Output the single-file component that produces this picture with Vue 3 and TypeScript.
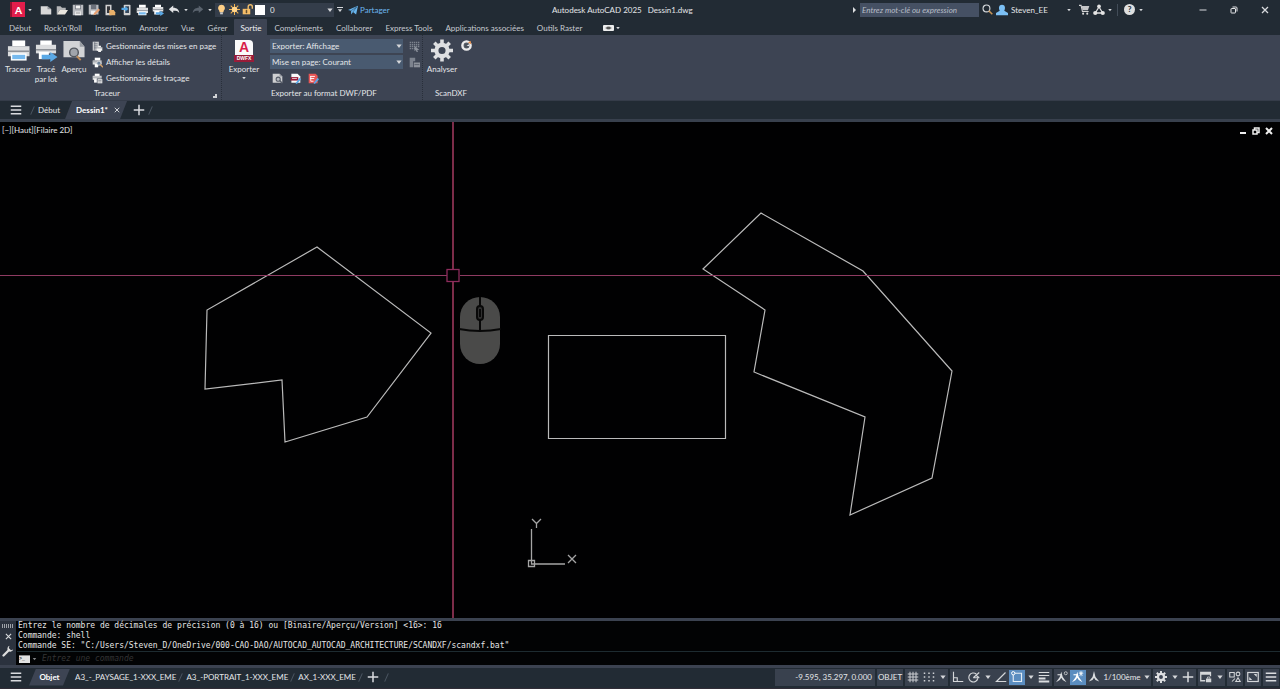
<script setup lang="ts">
import { ref } from 'vue'

interface StatusItem { id: string; label: string; kind?: 'drop' | 'on' }

const quickAccess: [string, string][] = [
  ['i-new', 'Nouveau'], ['i-open', 'Ouvrir'], ['i-save', 'Enregistrer'], ['i-saveas', 'Enregistrer sous'],
  ['i-mobdoc', 'Ouvrir depuis mobile'], ['i-mobile', 'Enregistrer sur mobile'], ['i-print', 'Tracer'],
  ['i-batch', 'Tracé par lot'], ['i-undo', 'Annuler'],
]
const ribbonTabs = ['Début', "Rock'n'Roll", 'Insertion', 'Annoter', 'Vue', 'Gérer', 'Sortie', 'Compléments',
  'Collaborer', 'Express Tools', 'Applications associées', 'Outils Raster']
const activeTab = ref('Sortie')
const layer = ref('0')
const exportMode = ref('Exporter: Affichage')
const pageSetup = ref('Mise en page: Courant')
const search = ref('')
const command = ref('')
const layouts = ['A3_-_PAYSAGE_1-XXX_EME', 'A3_-PORTRAIT_1-XXX_EME', 'AX_1-XXX_EME']
const history = [
  'Entrez le nombre de décimales de précision (0 à 16) ou [Binaire/Aperçu/Version] <16>: 16',
  'Commande: shell',
  'Commande SE: "C:/Users/Steven_D/OneDrive/000-CAO-DAO/AUTOCAD_AUTOCAD_ARCHITECTURE/SCANDXF/scandxf.bat"',
]
const polygons = [
  '317,125 431,211 367,295 285,320 282,258 205,267 207,188',
  '548.5,213.5 725.5,213.5 725.5,316.5 548.5,316.5',
  '761,91 863,149 952,249 932,356 850,393 865,295 754,250 765,188 703,147',
]
const drafting: StatusItem[][] = [
  [{ id: 'i-grid', label: 'Grille' }, { id: 'i-dots', label: 'Accrochage' }, { id: 'i-down', label: 'Options accrochage', kind: 'drop' }],
  [{ id: 'i-ortho', label: 'Ortho' }, { id: 'i-polar', label: 'Polaire' }, { id: 'i-down', label: 'Options polaire', kind: 'drop' },
    { id: 'i-angle', label: 'Repérage' }, { id: 'i-osnap', label: 'Accrochage objet', kind: 'on' },
    { id: 'i-down', label: 'Options accrochage objet', kind: 'drop' }, { id: 'i-weight', label: 'Épaisseur' }],
  [{ id: 'i-ann1', label: 'Visibilité annotation' }, { id: 'i-ann2', label: 'Échelle automatique', kind: 'on' }, { id: 'i-ann', label: 'Annotation' }],
]
const system: StatusItem[][] = [
  [{ id: 'i-gear', label: 'Espace de travail' }, { id: 'i-down', label: 'Choix espace', kind: 'drop' }, { id: 'i-plus', label: 'Moniteur' }],
  [{ id: 'i-units', label: 'Interface' }, { id: 'i-down', label: 'Options interface', kind: 'drop' }],
  [{ id: 'i-isolate', label: 'Isoler' }],
  [{ id: 'i-full', label: 'Plein écran' }],
  [{ id: 'i-menu', label: 'Personnalisation' }],
]
</script>

<template>
  <div class="app">
    <svg class="defs" aria-hidden="true">
      <symbol id="i-down" viewBox="0 0 16 16"><path d="M1 4h14l-7 9z" fill="#d5d7da" /></symbol>
      <symbol id="i-new" viewBox="0 0 16 16"><path d="M1 3h9l5 4v7H1z" fill="#d8d8d8" /><path d="M10 3v4h5z" fill="#8d9198" /></symbol>
      <symbol id="i-open" viewBox="0 0 16 16"><path d="M1 14V3h5l2 2h5v3H5z" fill="#b5b6b8" /><path d="M5 8h11l-4 6H1z" fill="#ebe7df" /></symbol>
      <symbol id="i-save" viewBox="0 0 16 16"><path d="M1 1h14v14H1z" fill="#b9bbbf" /><path d="M4 1h8v6H4z" fill="#6c717b" /><path d="M5 2h6v4H5zM4 10h8v5H4z" fill="#f0f0f0" /><path d="M5 12h6" stroke="#777" /></symbol>
      <symbol id="i-saveas" viewBox="0 0 16 16"><path d="M1 1h13v13H1z" fill="#b9bbbf" /><path d="M4 1h7v6H4z" fill="#6c717b" /><path d="M4 9h6v5H4z" fill="#f0f0f0" /><path d="M7 15l1-3 6-6 2 2-6 6z" fill="#e8a070" /></symbol>
      <symbol id="i-mobdoc" viewBox="0 0 16 16"><rect x="2" y="1" width="8" height="14" fill="#d2d2d2" /><path d="M4 3h4v9H4z" fill="#34363b" /><path d="M7 8h6l2 3v4H7z" fill="#e8b06a" /></symbol>
      <symbol id="i-mobile" viewBox="0 0 16 16"><rect x="5" y="1" width="9" height="14" rx="1" fill="#d2d2d2" /><path d="M7 3h5v9H7z" fill="#35475b" /><path d="M2 5h5V3l4 3.500L7 10V8H2z" fill="#55a9e8" /></symbol>
      <symbol id="i-print" viewBox="0 0 16 16"><path d="M4 1h9v4H4z" fill="#fff" /><path d="M1 5h15v7H1z" fill="#dcdddf" /><path d="M1 8h15v1H1z" fill="#8a8d94" /><path d="M3 10h11v5H3z" fill="#fff" /><path d="M4 11h9v3H4z" fill="#76b9ee" /></symbol>
      <symbol id="i-batch" viewBox="0 0 16 16"><path d="M4 1h8v4H4z" fill="#fff" /><path d="M1 4h14v6H1z" fill="#dcdddf" /><path d="M1 7h14v1H1z" fill="#8a8d94" /><path d="M3 9h7v5H3z" fill="#fff" /><path d="M5 11h6V9l5 3.500-5 3.500v-2H5z" fill="#5ba9e6" /></symbol>
      <symbol id="i-undo" viewBox="0 0 16 16"><path d="M1 7l6-5v3c5 0 8 3 8 7-2-3-4-3-8-3v3z" fill="#e2e3e5" /></symbol>
      <symbol id="i-redo" viewBox="0 0 16 16"><path d="M15 7L9 2v3C4 5 1 8 1 12c2-3 4-3 8-3v3z" fill="#59626d" /></symbol>
      <symbol id="i-bulb" viewBox="0 0 16 16"><path d="M8 1a5 5 0 0 1 3 9v2H5v-2a5 5 0 0 1 3-9z" fill="#ffcf86" /><path d="M6 12h4v3H6z" fill="#c9c9c9" /></symbol>
      <symbol id="i-sun" viewBox="0 0 16 16"><path d="M8 0v16M0 8h16M2.500 2.500l11 11M13.500 2.500l-11 11" stroke="#f0b04e" stroke-width="1.500" /><circle cx="8" cy="8" r="4" fill="#ffd48c" /></symbol>
      <symbol id="i-lock" viewBox="0 0 16 16"><path d="M9 8V4a3 3 0 0 1 6 0v3" fill="none" stroke="#f0bd6b" stroke-width="2" /><path d="M1 7h11v8H1z" fill="#f4bd68" /><path d="M6 9h1v4H6z" fill="#59462b" stroke="#59462b" /></symbol>
      <symbol id="i-plane" viewBox="0 0 16 16"><path d="M0 8L16 1l-3 14-5-4-3 4V9z" fill="#68b5ee" /><path d="M5 9l9-6-6 8" fill="none" stroke="#294b66" /></symbol>
      <symbol id="i-search" viewBox="0 0 16 16"><circle cx="6.500" cy="6.500" r="5" fill="none" stroke="#d7dade" stroke-width="1.600" /><path d="M10 10l5 5" stroke="#c99556" stroke-width="2.200" /></symbol>
      <symbol id="i-user" viewBox="0 0 16 16"><path d="M5 9C3 5 4 1 8 1s5 4 3 8l5 3v3H0v-3z" fill="#7cc0f5" /></symbol>
      <symbol id="i-cart" viewBox="0 0 16 16"><path d="M0 2h3l2 9h9" fill="none" stroke="#d4d4d4" stroke-width="1.600" /><path d="M4 3h11l-2 6H5z" fill="#c5c6c8" /><circle cx="6" cy="14" r="1.500" fill="#ddd" /><circle cx="12" cy="14" r="1.500" fill="#ddd" /></symbol>
      <symbol id="i-apps" viewBox="0 0 16 16"><path d="M8 4l5 8H3z" fill="none" stroke="#dedede" stroke-width="1.700" /><circle cx="8" cy="3" r="2.500" fill="#e4e4e4" /><circle cx="3" cy="12" r="2.800" fill="#e4e4e4" /><circle cx="13" cy="12" r="2.800" fill="#e4e4e4" /></symbol>
      <symbol id="i-menu" viewBox="0 0 16 16"><path d="M1 3h14M1 8h14M1 13h14" stroke="#dadcdf" stroke-width="2" /></symbol>
      <symbol id="i-plus" viewBox="0 0 16 16"><path d="M8 1v14M1 8h14" stroke="#dadcdf" stroke-width="2" /></symbol>
      <symbol id="i-x" viewBox="0 0 16 16"><path d="M2 2l12 12M14 2L2 14" stroke="#d8dadd" stroke-width="2.500" /></symbol>
      <symbol id="i-min" viewBox="0 0 16 16"><path d="M1 8h14" stroke="#d8dadd" stroke-width="2" /></symbol>
      <symbol id="i-restore" viewBox="0 0 16 16"><rect x="2" y="5" width="9" height="9" rx="1" fill="none" stroke="#e4e5e7" stroke-width="2" /><path d="M5 2h7q2 0 2 2v7" fill="none" stroke="#e4e5e7" stroke-width="2" /></symbol>
      <symbol id="i-page" viewBox="0 0 16 16"><path d="M1 1h9v13H1z" fill="#c9cbce" /><path d="M3 4h5M3 7h5M3 10h5M4 1v13" stroke="#656b77" /><path d="M7 9h8v5H7zM9 7h4v2H9zM9 12h4v4H9z" fill="#f3f3f3" /><path d="M7 10h8" stroke="#7b8089" /></symbol>
      <symbol id="i-detail" viewBox="0 0 16 16"><path d="M4 1h8v4H4z" fill="#fff" /><path d="M1 5h13v6H1z" fill="#dcdddf" /><path d="M1 7h13" stroke="#80848c" /><path d="M4 10h5v5H4z" fill="#fff" /><circle cx="10" cy="9" r="3" fill="#6b8198" stroke="#e8e8e8" /><path d="M12 11l4 4" stroke="#d3a16a" stroke-width="2" /></symbol>
      <symbol id="i-plotmgr" viewBox="0 0 16 16"><path d="M4 1h7v4H4z" fill="#fff" /><path d="M1 4h13v6H1z" fill="#dcdddf" /><path d="M1 6h13" stroke="#80848c" /><path d="M3 9h5v5H3z" fill="#fff" /><path d="M7 8h9v8H7z" fill="#3d4453" /><path d="M8 9h7v6H8z" fill="#f0f0f0" /><path d="M9 11h5M9 13h5" stroke="#747a84" /></symbol>
      <symbol id="i-previewS" viewBox="0 0 16 16"><path d="M1 1h10l4 4v9H1z" fill="#cfd0d2" /><path d="M11 1v4h4z" fill="#94989f" /><circle cx="9" cy="9" r="3" fill="#b9bcc2" stroke="#565c68" stroke-width="1.500" /><path d="M11 11l4 4" stroke="#565c68" stroke-width="2" /></symbol>
      <symbol id="i-dwf" viewBox="0 0 16 16"><path d="M2 1h9l4 4v9H2z" fill="#fafafa" /><path d="M1 6h11v5H1z" fill="#991c38" /><path d="M3 8h7" stroke="#fff" /><path d="M8 15l6-8 2 2-6 7z" fill="#58a7e8" /></symbol>
      <symbol id="i-pdf" viewBox="0 0 16 16"><path d="M1 1h10l3 3v11H1z" fill="#e65656" /><path d="M3 5h7M3 8h6M4 5v7h4" stroke="#fff" fill="none" stroke-width="1.300" /><path d="M8 15l6-8 2 2-6 7z" fill="#58a7e8" /></symbol>
      <symbol id="i-window" viewBox="0 0 16 16"><path d="M1 2h14M1 5h14M1 8h14M1 11h8" stroke="#7d838e" stroke-width="2" stroke-dasharray="2 1" /><path d="M8 7l7 6-3 0 1 3-2 0-1-3-2 2z" fill="#8c929c" /></symbol>
      <symbol id="i-override" viewBox="0 0 16 16"><path d="M1 1h8v5H6v9H1z" fill="#7d838e" /><path d="M7 8h9v7H7z" fill="#8d929b" /><path d="M8 11h7" stroke="#4a505c" /></symbol>
      <symbol id="i-gear" viewBox="0 0 16 16"><path d="M8 0v16M0 8h16M2.400 2.400l11.200 11.200M13.600 2.400L2.400 13.600" stroke="#dedfe1" stroke-width="2.600" /><circle cx="8" cy="8" r="4.100" fill="#3d4453" stroke="#dedfe1" stroke-width="3" /></symbol>
      <symbol id="i-scan" viewBox="0 0 16 16"><circle cx="8" cy="8" r="6" fill="#555b64" stroke="#ececec" stroke-width="3.500" /><path d="M6 6h5v5H6z" fill="#4a505a" /><path d="M8 8l4-2v3z" fill="#eee" /><path d="M10 4l4-3 1 5z" fill="#e28b4b" /></symbol>
      <symbol id="i-wrench" viewBox="0 0 16 16"><path d="M2 14l7-7" stroke="#dedede" stroke-width="3" stroke-linecap="round" /><path d="M10 1a4 4 0 1 0 5 5l-3 1-3-3z" fill="#dedede" /></symbol>
      <symbol id="i-grid" viewBox="0 0 16 16"><path d="M4 1v14M8 1v14M12 1v14M1 4h14M1 8h14M1 12h14" stroke="#cfd1d5" stroke-width="1.300" /></symbol>
      <symbol id="i-dots" viewBox="0 0 16 16"><path d="M1 3h14M1 8h14M1 13h14" stroke="#cfd1d5" stroke-width="2" stroke-dasharray="2 4" /></symbol>
      <symbol id="i-ortho" viewBox="0 0 16 16"><path d="M2 1v13h13M2 9h5v5" fill="none" stroke="#d4d6d9" stroke-width="1.500" /></symbol>
      <symbol id="i-polar" viewBox="0 0 16 16"><path d="M13 10a6 6 0 1 1-2-6M7 9l8-7M7 9h8M11 6l4 3" fill="none" stroke="#d4d6d9" stroke-width="1.500" /></symbol>
      <symbol id="i-angle" viewBox="0 0 16 16"><path d="M14 2L2 14h13" fill="none" stroke="#d4d6d9" stroke-width="1.600" /></symbol>
      <symbol id="i-osnap" viewBox="0 0 16 16"><path d="M3 3h11v11H3z" fill="none" stroke="#e5edf4" stroke-width="1.500" /><circle cx="3" cy="3" r="2.200" fill="#5b8dc0" stroke="#fff" stroke-width="1.300" /></symbol>
      <symbol id="i-weight" viewBox="0 0 16 16"><path d="M1 2h14M1 6h14" stroke="#dadcdf" stroke-width="1.500" /><path d="M1 10h9M1 14h14" stroke="#dadcdf" stroke-width="2.500" /></symbol>
      <symbol id="i-ann" viewBox="0 0 16 16"><path d="M8 0l2 8 5 6-5-2-2-3-2 3-5 2 5-6z" fill="#dcdee0" /></symbol>
      <symbol id="i-ann1" viewBox="0 0 16 16"><path d="M7 1l2 7 5 7-5-3-2-3-2 3-5 3 5-7z" fill="#dcdee0" /><path d="M2 5h5" stroke="#dcdee0" stroke-width="1.500" /><circle cx="13" cy="3" r="2" fill="none" stroke="#ddd" /></symbol>
      <symbol id="i-ann2" viewBox="0 0 16 16"><path d="M7 1l2 7 5 7-5-3-2-3-2 3-5 3 5-7z" fill="#fff" /><path d="M2 5h5" stroke="#fff" stroke-width="1.500" /><path d="M12 0v7M9 3h6M10 1l4 5M14 1l-4 5" stroke="#fff" /></symbol>
      <symbol id="i-units" viewBox="0 0 16 16"><path d="M7 13H1V2h13v5M1 4h13" fill="none" stroke="#d4d6d9" stroke-width="1.700" /><path d="M8 10h7v5H8z" fill="#d4d6d9" /><path d="M10 10V8h3v2" fill="none" stroke="#d4d6d9" /></symbol>
      <symbol id="i-isolate" viewBox="0 0 16 16"><path d="M1 2h6v6H1zM9 14l3-5 3 5zM4 14l4-4" fill="none" stroke="#d4d6d9" stroke-width="1.400" /><circle cx="12" cy="4" r="2.500" fill="none" stroke="#d4d6d9" stroke-width="1.400" /></symbol>
      <symbol id="i-full" viewBox="0 0 16 16"><rect x="1" y="2" width="14" height="12" fill="none" stroke="#d4d6d9" stroke-width="1.600" /><path d="M9 4h4v4zM3 8v4h4z" fill="#d4d6d9" /></symbol>
    </svg>

    <header class="titlebar">
      <div class="quick">
        <button class="logo" aria-label="Menu application">A</button>
        <svg class="caret logo-caret"><use href="#i-down" /></svg>
        <button v-for="[id, label] in quickAccess" :key="id" class="qa" :aria-label="label"><svg class="ic"><use :href="'#' + id" /></svg></button>
        <button class="tiny" aria-label="Liste annuler"><svg class="caret"><use href="#i-down" /></svg></button>
        <button class="qa" aria-label="Rétablir"><svg class="ic"><use href="#i-redo" /></svg></button>
        <button class="tiny" aria-label="Liste rétablir"><svg class="caret"><use href="#i-down" /></svg></button>
        <div class="layer">
          <svg class="ic"><use href="#i-bulb" /></svg>
          <svg class="ic"><use href="#i-sun" /></svg>
          <svg class="ic"><use href="#i-lock" /></svg>
          <span class="swatch"></span>
          <select v-model="layer" aria-label="Calque"><option>0</option></select>
          <svg class="drop"><use href="#i-down" /></svg>
        </div>
        <button class="more" aria-label="Personnaliser"><svg class="drop"><use href="#i-down" /></svg></button>
        <button class="share"><svg class="ic"><use href="#i-plane" /></svg>Partager</button>
      </div>
      <div class="title"><span>Autodesk AutoCAD 2025</span><span>Dessin1.dwg</span></div>
      <div class="account">
        <span class="play"></span>
        <input v-model="search" class="search" type="text" placeholder="Entrez mot-clé ou expression" aria-label="Recherche" />
        <button class="qa" aria-label="Rechercher"><svg class="ic"><use href="#i-search" /></svg></button>
        <button class="user"><svg class="ic"><use href="#i-user" /></svg>Steven_EE<svg class="caret"><use href="#i-down" /></svg></button>
        <button class="qa" aria-label="Boutique"><svg class="ic small"><use href="#i-cart" /></svg></button>
        <button class="apps" aria-label="Applications"><svg class="ic"><use href="#i-apps" /></svg><svg class="caret"><use href="#i-down" /></svg></button>
        <button class="help" aria-label="Aide"><span>?</span><svg class="caret"><use href="#i-down" /></svg></button>
        <div class="window">
          <button aria-label="Réduire"><svg><use href="#i-min" /></svg></button>
          <button aria-label="Restaurer"><svg><use href="#i-restore" /></svg></button>
          <button aria-label="Fermer"><svg><use href="#i-x" /></svg></button>
        </div>
      </div>
    </header>

    <nav class="tabs">
      <button v-for="t in ribbonTabs" :key="t" :class="{ active: t === activeTab }" @click="activeTab = t">{{ t }}</button>
      <button class="collapse" aria-label="Réduire le ruban"><span></span><svg class="caret"><use href="#i-down" /></svg></button>
    </nav>

    <section class="ribbon">
      <div class="panel plot">
        <div class="tools">
          <button class="big"><svg><use href="#i-print" /></svg>Traceur</button>
          <button class="big batch"><svg><use href="#i-batch" /></svg>Tracé<br />par lot</button>
          <button class="big">
            <svg viewBox="0 0 24 24"><path d="M1 2h17l5 6v11H1z" fill="#d2d3d5" /><path d="M18 2v6h5z" fill="#999da3" /><circle cx="12" cy="14" r="4.500" fill="#a1a5ab" stroke="#53585f" stroke-width="1.500" /><path d="M15 18l4 4" stroke="#bd8a57" stroke-width="2" /></svg>Aperçu
          </button>
          <div class="list">
            <button><svg class="ic"><use href="#i-page" /></svg>Gestionnaire des mises en page</button>
            <button><svg class="ic"><use href="#i-detail" /></svg>Afficher les détails</button>
            <button><svg class="ic"><use href="#i-plotmgr" /></svg>Gestionnaire de traçage</button>
          </div>
        </div>
        <div class="caption">Traceur<span class="launcher"></span></div>
      </div>
      <div class="panel export">
        <button class="big dwfx">
          <span class="file"><b>A</b><i>DWFX</i></span>Exporter
          <svg class="caret"><use href="#i-down" /></svg>
        </button>
        <div class="side">
          <div class="row">
            <label class="combo"><select v-model="exportMode" aria-label="Zone à exporter"><option>Exporter: Affichage</option></select><svg class="drop"><use href="#i-down" /></svg></label>
            <svg class="ic"><use href="#i-window" /></svg>
          </div>
          <div class="row">
            <label class="combo"><select v-model="pageSetup" aria-label="Mise en page"><option>Mise en page: Courant</option></select><svg class="drop"><use href="#i-down" /></svg></label>
            <svg class="ic"><use href="#i-override" /></svg>
          </div>
          <div class="row minis">
            <button aria-label="Aperçu"><svg class="ic"><use href="#i-previewS" /></svg></button>
            <button aria-label="Options DWF"><svg class="ic"><use href="#i-dwf" /></svg></button>
            <button aria-label="Options PDF"><svg class="ic"><use href="#i-pdf" /></svg></button>
          </div>
          <div class="caption">Exporter au format DWF/PDF</div>
        </div>
      </div>
      <div class="panel scan">
        <div class="tools">
          <button class="big"><svg><use href="#i-gear" /></svg>Analyser</button>
          <button class="scan-mini" aria-label="Options d'analyse"><svg class="ic"><use href="#i-scan" /></svg></button>
        </div>
        <div class="caption">ScanDXF</div>
      </div>
    </section>

    <nav class="files">
      <button class="burger" aria-label="Menu fichiers"><svg class="ic"><use href="#i-menu" /></svg></button>
      <span class="slash"></span>
      <button class="file-tab">Début</button>
      <button class="file-tab current">Dessin1*<svg><use href="#i-x" /></svg></button>
      <button class="add" aria-label="Nouveau dessin"><svg class="ic"><use href="#i-plus" /></svg></button>
      <span class="slash"></span>
    </nav>

    <main class="canvas">
      <svg class="drawing">
        <g fill="none" stroke="#bababa" stroke-width="1.200">
          <polygon v-for="p in polygons" :key="p" :points="p" />
        </g>
        <path d="M0 153.500H447M460 153.500H4000" stroke="#8f3b62" />
        <path d="M453 0V147M453 160V2000" stroke="#7c2c49" stroke-width="2" />
        <rect x="447" y="147.500" width="12" height="12" fill="none" stroke="#8d2c5c" stroke-width="1.300" />
        <g fill="none" stroke="#a5a5a5" stroke-width="1.300">
          <path d="M531.500 407V442H565M528.500 438.500h6v6h-6zM532 397l4.500 4.500L541 397M536.500 401.500V406M568 433l8 8M576 433l-8 8" />
        </g>
        <rect x="460" y="175" width="40" height="67" rx="20" fill="#4a4a49" />
        <path d="M459 207q21 4 42 0M480 175v33" fill="none" stroke="#080808" stroke-width="2" />
        <rect x="477" y="184" width="6" height="14" rx="3" fill="#303030" stroke="#080808" stroke-width="2" />
        <path d="M480 187v8" stroke="#080808" stroke-width="2" />
      </svg>
      <div class="view-controls"><button>[−]</button><button>[Haut]</button><button>[Filaire 2D]</button></div>
      <div class="doc-window">
        <button aria-label="Réduire la vue"><svg><path d="M1 6h6" stroke="#eee" stroke-width="2" /></svg></button>
        <button aria-label="Restaurer la vue"><svg viewBox="0 0 16 16"><path d="M2 6h8v8H2zM5 6V2h9v9h-4" fill="none" stroke="#eee" stroke-width="3" /></svg></button>
        <button aria-label="Fermer la vue"><svg><path d="M1 1l6 6M7 1L1 7" stroke="#eee" stroke-width="2" /></svg></button>
      </div>
    </main>

    <section class="console">
      <div class="grip">
        <span class="bars"></span>
        <button aria-label="Fermer"><svg><use href="#i-x" /></svg></button>
        <button aria-label="Options"><svg class="wrench"><use href="#i-wrench" /></svg></button>
      </div>
      <div class="log">
        <p v-for="line in history" :key="line">{{ line }}</p>
        <label class="prompt"><span class="cmd-icon">&gt;_</span><svg class="caret"><use href="#i-down" /></svg><input v-model="command" type="text" placeholder="Entrez une commande" aria-label="Commande" /></label>
      </div>
    </section>

    <footer class="status">
      <button class="burger" aria-label="Menu présentations"><svg class="ic"><use href="#i-menu" /></svg></button>
      <button class="model">Objet</button>
      <template v-for="l in layouts" :key="l"><button class="layout">{{ l }}</button><span class="slash"></span></template>
      <button class="add" aria-label="Nouvelle présentation"><svg class="ic"><use href="#i-plus" /></svg></button>
      <span class="slash"></span>
      <div class="tray">
        <div class="cell coords">-9.595, 35.297, 0.000</div>
        <button class="cell object">OBJET</button>
        <div v-for="(g, n) in drafting" :key="n" class="cell">
          <button v-for="s in g" :key="s.label" :class="s.kind" :aria-label="s.label"><svg><use :href="'#' + s.id" /></svg></button>
          <button v-if="n === 2" class="scale">1/100ème<svg class="drop"><use href="#i-down" /></svg></button>
        </div>
        <div v-for="(g, n) in system" :key="'s' + n" class="cell">
          <button v-for="s in g" :key="s.label" :class="s.kind" :aria-label="s.label"><svg><use :href="'#' + s.id" /></svg></button>
        </div>
      </div>
    </footer>
  </div>
</template>

<style>
body { margin: 0; background: #222b34; }
</style>

<style scoped>
* { box-sizing: border-box; }
.app { min-height: 100vh; display: flex; flex-direction: column; background: #222b34; color: #e4e6e9; font: 8px/10px Lato, "Open Sans", sans-serif; white-space: nowrap; overflow: hidden; }
button, input, select { font: inherit; color: inherit; background: none; border: 0; padding: 0; margin: 0; }
button { display: flex; align-items: center; flex: none; cursor: pointer; }
svg { display: block; flex: none; }
.defs { position: absolute; width: 0; height: 0; }
.ic { width: 12px; height: 12px; }
.small { width: 10px; height: 10px; }
.caret { width: 4px; height: 4px; }
.drop { width: 6px; height: 6px; pointer-events: none; }
select { appearance: none; outline: 0; }

.titlebar { display: flex; align-items: center; height: 19px; }
.quick { display: flex; align-items: center; flex: 0 0 552px; }
.logo { width: 15px; height: 15px; margin-left: 10px; justify-content: center; background: #e21d4b; border-left: 2px solid #94102f; color: #fff; font-weight: 900; font-size: 10px; }
.logo-caret { margin: 0 6px 0 3px; }
.qa { width: 16px; justify-content: center; }
.tiny { width: 7px; justify-content: center; }
.quick .tiny + .qa { margin-left: 1px; }
.layer { display: flex; align-items: center; width: 119px; height: 14px; margin-left: 2px; padding: 0 1px; background: #343d4a; }
.layer .ic { width: 11px; height: 11px; margin-right: 2px; }
.swatch { width: 10px; height: 10px; background: #fff; }
.layer select { flex: 1; min-width: 0; padding-left: 5px; }
.more { width: 11px; justify-content: center; border: 0; }
.more .drop { border-top: 1px solid #d5d7da; }
.share { gap: 2px; margin-left: 3px; color: #6db7f0; }
.share .ic { width: 10px; height: 10px; }
.title { display: flex; gap: 6px; }
.account { display: flex; align-items: center; margin-left: auto; }
.play { border-left: 3px solid #dcdee0; border-top: 3px solid transparent; border-bottom: 3px solid transparent; margin-right: 4px; }
.search { width: 119px; height: 14px; padding: 0 2px; background: #455063; font-style: italic; border-radius: 0; }
.search::placeholder { color: #b7bdc7; opacity: 1; }
.account > .qa .ic { width: 11px; height: 11px; }
.user { gap: 3px; width: 75px; margin-left: 1px; }
.user .caret { margin-left: auto; }
.account .user + .qa { margin-left: 5px; }
.apps { gap: 3px; width: 26px; padding-left: 1px; border-right: 1px solid #424c58; }
.help { gap: 4px; margin-left: 6px; width: 37px; }
.help span { width: 11px; height: 11px; border-radius: 6px; background: #dedfe0; color: #2b333c; text-align: center; line-height: 11px; font-weight: 900; }
.window { display: flex; margin-left: 26px; }
.window button { width: 31px; justify-content: center; }
.window svg { width: 8px; height: 8px; }

.tabs { display: flex; height: 16px; padding-left: 2px; color: #c6cad0; }
.tabs button { height: 16px; padding: 2px 6px 0 7px; }
.tabs .active { background: #3d4453; color: #f0f1f3; border-radius: 1px 1px 0 0; }
.tabs .collapse { gap: 2px; margin-left: 8px; }
.collapse span { width: 11px; height: 6px; border-radius: 1px; background: radial-gradient(#555 20%, #edeeee 45%); }

.ribbon { display: flex; height: 66px; background: #3d4453; border-bottom: 1px solid #353c49; }
.panel { display: flex; border-right: 1px dotted #292f3a; }
.panel .tools { display: flex; height: 51px; }
.panel.plot, .panel.scan { flex-direction: column; }
.plot { width: 222px; padding-left: 4px; }
.big { width: 28px; flex-direction: column; gap: 2px; align-self: flex-start; padding-top: 4px; line-height: 10px; text-align: center; }
.big svg { width: 24px; height: 23px; }
.caption { height: 14px; line-height: 15px; text-align: center; position: relative; }
.launcher { position: absolute; right: 4px; bottom: 2px; width: 4px; height: 4px; border-right: 2px solid #d0d2d5; border-bottom: 2px solid #d0d2d5; }
.plot .caption { padding-right: 11px; }
.list { padding: 3px 0 0 4px; }
.list button { height: 16px; gap: 3px; }
.list .ic, .row .ic, .scan-mini .ic { width: 11px; height: 11px; }
.export { width: 201px; }
.dwfx { width: 44px; padding-top: 5px; }
.big .caret { width: 4px; height: 4px; }
.file { display: flex; flex-direction: column; width: 18px; height: 22px; background: #fafafa; color: #d81f4a; border-radius: 0 4px 0 0; }
.file b { font: 900 14px/15px "Liberation Sans", sans-serif; }
.file i { margin: 0 -1px; background: #981c39; color: #fff; font: bold 5px/7px "Liberation Sans", sans-serif; }
.side { padding: 3px 0 0 4px; }
.row { display: flex; align-items: center; height: 16px; gap: 6px; }
.combo { position: relative; display: flex; align-items: center; width: 133px; height: 14px; background: #495a70; }
.combo select { width: 100%; padding-left: 2px; }
.combo .drop { position: absolute; right: 1px; }
.minis { padding-left: 2px; gap: 7px; }
.side .caption { text-align: left; padding-left: 1px; line-height: 15px; }
.scan { width: 56px; border-right: 0; }
.scan .big { width: 38px; }
.scan .big svg { width: 22px; }
.scan-mini { align-self: flex-start; padding-top: 5px; }

.files { display: flex; align-items: center; height: 21px; border-bottom: 3px solid #38404d; }
.burger { width: 32px; height: 18px; justify-content: center; flex: none; }
.slash { width: 1px; height: 9px; background: #4b5561; transform: rotate(24deg); flex: none; }
.file-tab { height: 18px; padding: 0 5px; }
.current { width: 62px; gap: 6px; padding-left: 11px; background: #3d4453; color: #fff; font-weight: bold; clip-path: polygon(7px 0, 100% 0, 55px 100%, 0 100%); }
.current svg { width: 6px; height: 6px; }
.add { width: 25px; justify-content: center; }
.files .add { width: 23px; }

.canvas { position: relative; flex: 1; min-height: 300px; background: #010102; overflow: hidden; }
.drawing { position: absolute; inset: 0; width: 100%; height: 100%; }
.view-controls { position: absolute; left: 2px; top: 3px; display: flex; }
.doc-window { position: absolute; right: 7px; top: 5px; display: flex; gap: 5px; }
.doc-window svg { width: 8px; height: 8px; }

.console { display: flex; height: 50px; border-top: 3px solid #3b4250; border-bottom: 3px solid #3b4250; background: #020304; }
.grip { width: 16px; display: flex; flex-direction: column; align-items: center; gap: 5px; padding-top: 3px; background: #2b323e; }
.bars { width: 12px; height: 4px; background: repeating-linear-gradient(90deg, #9da1a8 0 1px, #2b323e 1px 2px); flex: none; }
.grip svg { width: 7px; height: 7px; }
.grip .wrench { width: 12px; height: 12px; }
.log { flex: 1; font: 8px/10px "DejaVu Sans Mono", "Liberation Mono", monospace; color: #e6e6e6; }
.log p { margin: 0; padding-left: 2px; height: 10px; line-height: 9px; white-space: pre; }
.prompt { display: flex; align-items: center; height: 14px; margin-left: 1px; padding: 0 0 0 2px; border-top: 1px solid #1d2b30; }
.cmd-icon { width: 11px; height: 8px; border-top: 1px solid #888; background: #e1e1e1; color: #333; font: bold 5px/7px "Liberation Mono", monospace; }
.prompt .caret { margin: 0 5px 0 2px; width: 5px; opacity: .6; }
.prompt input { flex: 1; font-style: italic; outline: 0; }
.prompt input::placeholder { color: #343434; opacity: 1; }

.status { display: flex; align-items: center; height: 21px; padding-bottom: 2px; border-bottom: 1px solid #302c36; }
.status .burger { width: 29px; padding-left: 3px; }
.model { width: 41px; height: 17px; justify-content: center; background: #3d4453; color: #fff; font-weight: bold; clip-path: polygon(7px 0, 100% 0, 34px 100%, 0 100%); }
.layout { padding: 0 4px 0 5px; }
.tray { display: flex; gap: 2px; margin-left: auto; padding-right: 1px; }
.cell { display: flex; align-items: center; height: 17px; background: #39414e; }
.cell button { width: 16px; height: 15px; justify-content: center; }
.cell svg { width: 12px; height: 12px; }
.cell .drop { width: 11px; }
.cell .drop svg, .cell svg.drop { width: 6px; height: 6px; }
.cell .on { background: #5b8dc0; }
.coords { width: 100px; justify-content: flex-end; padding-right: 3px; }
.tray .object { width: 26px; height: 17px; justify-content: center; }
.cell .scale { width: 49px; gap: 3px; }
</style>
